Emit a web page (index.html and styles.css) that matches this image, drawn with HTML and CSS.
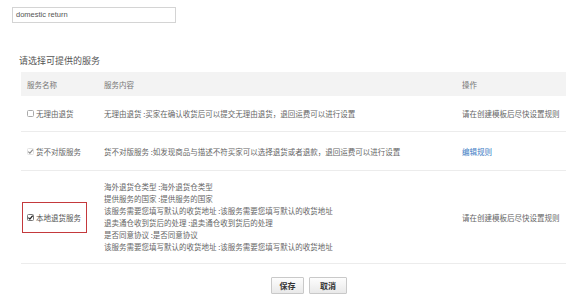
FILE: index.html
```html
<!DOCTYPE html>
<html lang="zh">
<head>
<meta charset="utf-8">
<link rel="stylesheet" href="styles.css">
</head>
<body>
<div class="page">
  <div class="search">domestic return</div>
  <div class="title">请选择可提供的服务</div>
  <table class="svc">
    <colgroup>
      <col class="c1"><col class="c2"><col class="c3">
    </colgroup>
    <thead>
      <tr><th>服务名称</th><th>服务内容</th><th>操作</th></tr>
    </thead>
    <tbody>
      <tr class="r1">
        <td><span class="opt"><svg class="cb" width="7" height="7" viewBox="0 0 7 7"><rect x="0.5" y="0.5" width="6" height="6" rx="1" fill="#fff" stroke="#aaa"/></svg>无理由退货</span></td>
        <td>无理由退货 :买家在确认收货后可以提交无理由退货，退回运费可以进行设置</td>
        <td>请在创建模板后尽快设置规则</td>
      </tr>
      <tr class="r2">
        <td><span class="opt"><svg class="cb" width="7" height="7" viewBox="0 0 7 7"><rect x="0.5" y="0.5" width="6" height="6" rx="1" fill="#fff" stroke="#e2e2e2"/><path d="M1.3 3.6 L2.9 5.1 L5.8 1.6" fill="none" stroke="#8a8a8a" stroke-width="1.1"/></svg>货不对版服务</span></td>
        <td>货不对版服务 :如发现商品与描述不符买家可以选择退货或者退款，退回运费可以进行设置</td>
        <td><span class="link">编辑规则</span></td>
      </tr>
      <tr class="r3">
        <td class="mark-cell"><span class="opt mark"><svg class="cb" width="7" height="7" viewBox="0 0 7 7"><rect x="0.5" y="0.5" width="6" height="6" rx="1" fill="#fff" stroke="#777"/><path d="M1.4 3.6 L2.9 5.1 L5.7 1.7" fill="none" stroke="#222" stroke-width="1.3"/></svg>本地退货服务</span></td>
        <td class="lines">
          <div>海外退货仓类型 :海外退货仓类型</div>
          <div>提供服务的国家 :提供服务的国家</div>
          <div>该服务需要您填写默认的收货地址 :该服务需要您填写默认的收货地址</div>
          <div>退卖通仓收到货后的处理 :退卖通仓收到货后的处理</div>
          <div>是否同意协议 :是否同意协议</div>
          <div>该服务需要您填写默认的收货地址 :该服务需要您填写默认的收货地址</div>
        </td>
        <td>请在创建模板后尽快设置规则</td>
      </tr>
    </tbody>
  </table>
  <div class="actions">
    <button class="btn save">保存</button>
    <button class="btn cancel">取消</button>
  </div>
</div>
</body>
</html>
```
FILE: styles.css
```css
html, body {
  margin: 0;
  padding: 0;
  background: #fff;
}
body {
  font-family: "Noto Sans CJK SC", "Liberation Sans", sans-serif;
  color: #666;
  font-size: 7.5px;
}
.page {
  padding-top: 7px;
}
.search {
  margin-left: 12px;
  width: 164px;
  height: 16px;
  box-sizing: border-box;
  border: 1px solid #d4d4d4;
  font-family: "Liberation Sans", Arial, sans-serif;
  font-size: 7.5px;
  line-height: 14px;
  padding-left: 3px;
  color: #555;
}
.title {
  margin: 32px 0 5px 19px;
  font-size: 9px;
  line-height: 12px;
  color: #555;
}
.svc {
  margin-left: 21px;
  width: 545px;
  border-collapse: collapse;
  table-layout: fixed;
}
.c1 { width: 76px; }
.c2 { width: 358px; }
.c3 { width: 111px; }
.svc th {
  background: #f3f3f3;
  height: 24px;
  padding: 0 0 0 7px;
  text-align: left;
  font-weight: normal;
  font-size: 7.5px;
  color: #777;
}
.svc th:first-child { padding-left: 6px; }
.svc td {
  padding: 0 0 0 7px;
  border-bottom: 1px solid #ececec;
  vertical-align: middle;
  white-space: nowrap;
  color: #666;
}
.svc td:first-child { padding-left: 6px; }
.r1 td { height: 35px; }
.r2 td { height: 38px; }
.r3 td { height: 92px; }
.opt {
  display: inline-flex;
  align-items: center;
  gap: 2px;
}
.cb { display: block; flex: none; }
.svc td.mark-cell { padding-left: 1px; }
.mark {
  border: 1.5px solid #c4393c;
  padding: 9px 5px 9px 4px;
  color: #555;
}
.lines div {
  line-height: 12px;
}
.link { color: #3b7bc4; }
.actions {
  display: flex;
  gap: 5px;
  padding-left: 271px;
  margin-top: 13px;
}
.btn {
  height: 17px;
  box-sizing: border-box;
  border: 1px solid #c9c9c9;
  border-radius: 1px;
  background: linear-gradient(#fdfdfd, #e9e9e9);
  font-family: "Noto Sans CJK SC", sans-serif;
  font-size: 8px;
  font-weight: bold;
  color: #333;
  padding: 0;
  line-height: 15px;
}
.save { width: 33px; }
.cancel { width: 38px; }
```
